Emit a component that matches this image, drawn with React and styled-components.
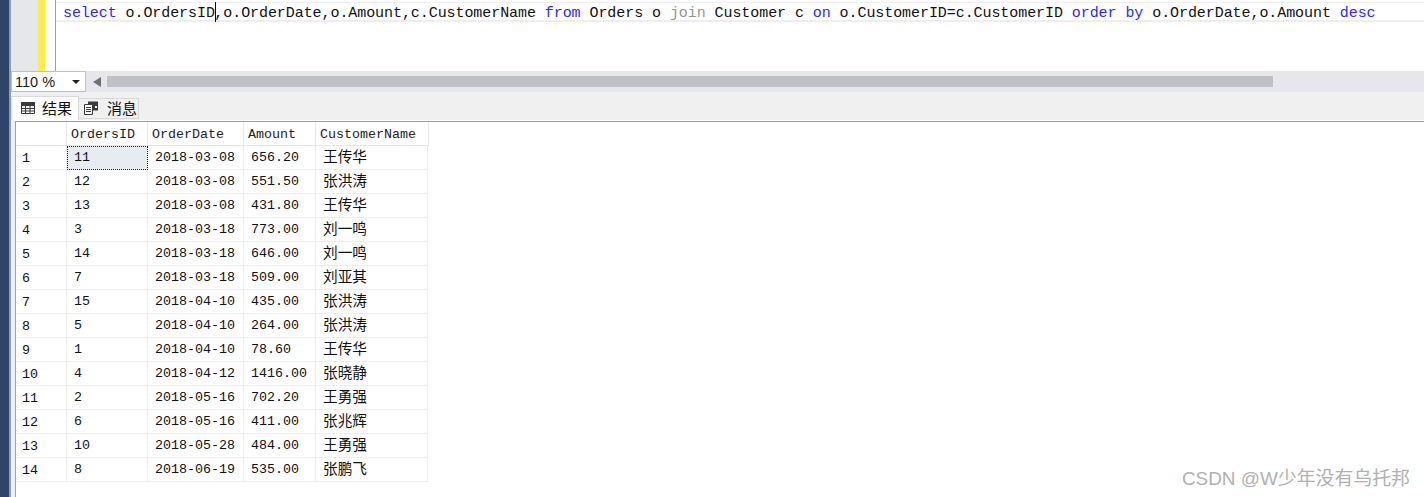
import styled, { createGlobalStyle } from "styled-components";

const rows = [
  [1, 11, "2018-03-08", "656.20", "王传华"],
  [2, 12, "2018-03-08", "551.50", "张洪涛"],
  [3, 13, "2018-03-08", "431.80", "王传华"],
  [4, 3, "2018-03-18", "773.00", "刘一鸣"],
  [5, 14, "2018-03-18", "646.00", "刘一鸣"],
  [6, 7, "2018-03-18", "509.00", "刘亚其"],
  [7, 15, "2018-04-10", "435.00", "张洪涛"],
  [8, 5, "2018-04-10", "264.00", "张洪涛"],
  [9, 1, "2018-04-10", "78.60", "王传华"],
  [10, 4, "2018-04-12", "1416.00", "张晓静"],
  [11, 2, "2018-05-16", "702.20", "王勇强"],
  [12, 6, "2018-05-16", "411.00", "张兆辉"],
  [13, 10, "2018-05-28", "484.00", "王勇强"],
  [14, 8, "2018-06-19", "535.00", "张鹏飞"],
];

const App = () => (
  <Page>
    <GlobalStyle />
    <Stripe />
    <Main>
      <Editor>
        <Gutter />
        <ChangeBar />
        <Margin />
        <CodeArea>
          <CodeLine>
            <Kw>select</Kw> o.OrdersID<Caret />,o.OrderDate,o.Amount,c.CustomerName <Kw>from</Kw> Orders o{" "}
            <Gray>join</Gray> Customer c <Kw>on</Kw> o.CustomerID=c.CustomerID <Kw>order by</Kw> o.OrderDate,o.Amount{" "}
            <Kw>desc</Kw>
          </CodeLine>
        </CodeArea>
      </Editor>

      <ScrollRow>
        <ZoomBox>
          110 %
          <ZoomArrow />
        </ZoomBox>
        <ScrollArrow />
        <ScrollThumb />
      </ScrollRow>

      <Tabs>
        <Tab $active>
          <svg width="14" height="12" viewBox="0 0 14 12">
            <path
              d="M.5 .5h13v11H.5zM.5 3.5h13M.5 6.5h13M.5 9h13M4.5 3.5v8M9 3.5v8"
              fill="none"
              stroke="#3a3a3a"
            />
            <rect x="0" y="0" width="14" height="3" fill="#3a3a3a" />
          </svg>
          结果
        </Tab>
        <Tab>
          <svg width="15" height="14" viewBox="0 0 15 14">
            <path d="M.5 3.5h8v10h-8zM2 6.5h5M2 8.5h5M2 10.5h5" fill="#fff" stroke="#3a3a3a" />
            <path d="M4 2.5V.5h10V9.5H9V3.5H4z" fill="#3a3a3a" />
            <rect x="11" y="5" width="2" height="2" fill="#fff" />
          </svg>
          消息
        </Tab>
      </Tabs>

      <Results>
        <Grid>
          <HeadRow>
            <HeadCell />
            <HeadCell>OrdersID</HeadCell>
            <HeadCell>OrderDate</HeadCell>
            <HeadCell>Amount</HeadCell>
            <HeadCell>CustomerName</HeadCell>
          </HeadRow>
          {rows.map((r, i) => (
            <DataRow key={r[0]}>
              <RowNum>{r[0]}</RowNum>
              <Cell $selected={i === 0}>{r[1]}</Cell>
              <Cell>{r[2]}</Cell>
              <Cell>{r[3]}</Cell>
              <NameCell>{r[4]}</NameCell>
            </DataRow>
          ))}
        </Grid>
        <Watermark>CSDN @W少年没有乌托邦</Watermark>
      </Results>
    </Main>
  </Page>
);

export default App;

/* ================= STYLES ================= */

const GlobalStyle = createGlobalStyle`
  html, body {
    margin: 0;
    padding: 0;
    background: #fff;
    overflow: hidden;
  }
`;

const mono = `"Liberation Mono", "Noto Sans CJK SC", monospace`;

const Page = styled.div`
  display: flex;
  width: 1424px;
  height: 497px;
  overflow: hidden;
  font-family: ${mono};
  color: #000;
`;

const Stripe = styled.div`
  flex: 0 0 11px;
  box-sizing: border-box;
  background: #2f4468;
  border-right: 2px solid #8e9bb3;
`;

const Main = styled.div`
  flex: 1;
  min-width: 0;
  display: flex;
  flex-direction: column;
`;

const Editor = styled.div`
  display: flex;
  height: 71px;
`;

const Gutter = styled.div`
  flex: 0 0 27px;
  background: #e6e7e8;
`;

const ChangeBar = styled.div`
  flex: 0 0 7px;
  background: #fee94e;
`;

const Margin = styled.div`
  flex: 0 0 10px;
  background: #fff;
  border-right: 1px solid #a0a0a0;
`;

const CodeArea = styled.div`
  flex: 1;
  min-width: 0;
  padding-top: 2px;
`;

const CodeLine = styled.div`
  box-sizing: border-box;
  height: 20px;
  padding-left: 7px;
  border-top: 1px solid #f0eff5;
  border-bottom: 2px solid #eeeef2;
  font-size: 15px;
  line-height: 22px;
  letter-spacing: -0.07px;
  white-space: pre;
  color: #111;
`;

const Kw = styled.span`
  color: #2a2aff;
`;

const Gray = styled.span`
  color: #9a958c;
`;

const Caret = styled.span`
  display: inline-block;
  width: 0;
  height: 20px;
  margin: -4px -1.5px -5px 0;
  border-left: 1.5px solid #000;
`;

const ScrollRow = styled.div`
  display: flex;
  align-items: center;
  height: 21px;
  background: #e6e6ec;
`;

const ZoomBox = styled.div`
  position: relative;
  box-sizing: border-box;
  flex: 0 0 75px;
  height: 21px;
  padding-left: 3px;
  background: #fff;
  border: 1px solid #b9c2d4;
  font-family: "Liberation Sans", sans-serif;
  font-size: 14.5px;
  line-height: 21px;
  color: #1a1a1a;
`;

const ZoomArrow = styled.span`
  position: absolute;
  right: 5px;
  top: 8px;
  border-left: 4px solid transparent;
  border-right: 4px solid transparent;
  border-top: 4px solid #222;
`;

const ScrollArrow = styled.span`
  margin-left: 7px;
  border-top: 5.5px solid transparent;
  border-bottom: 5.5px solid transparent;
  border-right: 8px solid #6d6f78;
`;

const ScrollThumb = styled.div`
  margin-left: 6px;
  width: 1166px;
  height: 11px;
  background: #c0c1c5;
`;

const Tabs = styled.div`
  display: flex;
  align-items: flex-end;
  height: 28px;
  background: #f0f0f0;
`;

const Tab = styled.div`
  display: flex;
  align-items: center;
  box-sizing: border-box;
  gap: ${(p) => (p.$active ? "7px" : "8px")};
  height: ${(p) => (p.$active ? "24px" : "21px")};
  margin-bottom: ${(p) => (p.$active ? "0" : "1px")};
  padding-left: ${(p) => (p.$active ? "9px" : "5px")};
  padding-bottom: 2px;
  width: ${(p) => (p.$active ? "68px" : "60px")};
  background: ${(p) => (p.$active ? "#fff" : "#f0f0f0")};
  border: 1px solid #d9d9d9;
  border-bottom: ${(p) => (p.$active ? "none" : "1px solid #d9d9d9")};
  border-left: ${(p) => (p.$active ? "1px solid #d9d9d9" : "none")};
  font-family: "Noto Sans CJK SC", sans-serif;
  font-size: 15px;
  color: #111;
`;

const Results = styled.div`
  position: relative;
  flex: 1;
  padding: 1px 0 0 4px;
  background: #fff;
  box-shadow: inset 4px 0 0 #f0f0f0;
`;

const Grid = styled.div`
  display: flex;
  flex-direction: column;
  align-items: flex-start;
  box-sizing: border-box;
  height: 376px;
  border-left: 1px solid #a0a0a0;
  border-top: 1px solid #a0a0a0;
`;

const columns = "51px 81px 96px 72px";

const HeadRow = styled.div`
  display: grid;
  grid-template-columns: ${columns} 113px;
  grid-template-rows: 24px;
`;

const DataRow = styled.div`
  display: grid;
  grid-template-columns: ${columns} 112px;
  grid-template-rows: 24px;
`;

const HeadCell = styled.div`
  box-sizing: border-box;
  padding: 2px 0 0 4px;
  border-right: 1px solid #e8e8e8;
  border-bottom: 1px solid #e8e8e8;
  font-size: 13.33px;
  line-height: 21px;
  color: #222;
`;

const Cell = styled.div`
  box-sizing: border-box;
  padding: 1px 0 0 7px;
  border-right: 1px solid #eeeeee;
  border-bottom: 1px solid #eeeeee;
  font-size: 13.33px;
  line-height: 22px;
  white-space: pre;
  color: #111;
  background: ${(p) => (p.$selected ? "#e7ecf0" : "transparent")};
  outline: ${(p) => (p.$selected ? "1px dotted #222" : "none")};
  outline-offset: -1px;
`;

const RowNum = styled(Cell)`
  padding: 2px 0 0 6px;
`;

const NameCell = styled(Cell)`
  font-size: 14.67px;
`;

const Watermark = styled.div`
  position: absolute;
  right: 14px;
  bottom: 7px;
  font-family: "Liberation Sans", "Noto Sans CJK SC", sans-serif;
  font-size: 18.9px;
  color: #b0b0b0;
`;
